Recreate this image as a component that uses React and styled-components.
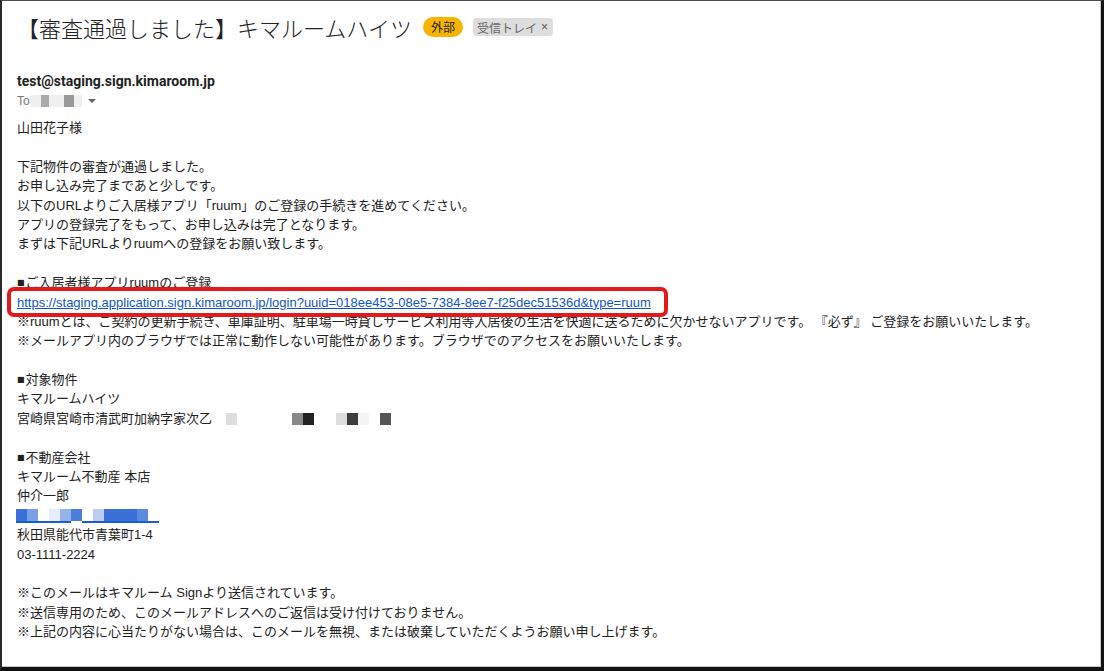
import React from "react";
import styled, { createGlobalStyle } from "styled-components";

const Global = createGlobalStyle`
  html, body { margin: 0; padding: 0; background: #fff; }
  body { font-family: "Liberation Sans", "Noto Sans CJK JP", sans-serif; }
`;

const Frame = styled.div`
  box-sizing: border-box;
  width: 1104px;
  height: 671px;
  background: #fff;
  border-top: 1px solid #4a4a4a;
  border-left: 2px solid #2a2a2a;
  border-right: 3px solid #111;
  border-bottom: 4px solid #111;
  box-shadow: inset -1px -1px 0 #c8c8c8;
  padding: 12px 0 0 15px;
  overflow: hidden;
  color: #222;
`;

const HeaderRow = styled.div`
  display: flex;
  align-items: center;
  height: 28px;
`;

const Title = styled.h1`
  margin: 0;
  font-family: "Noto Sans CJK JP", sans-serif;
  font-size: 22px;
  line-height: 28px;
  font-weight: 300;
  color: #222;
  white-space: nowrap;
`;

const Pill = styled.span`
  margin-left: 11px;
  height: 20px;
  padding: 0 8px;
  border-radius: 10px;
  background: #f6b400;
  color: #222;
  font-family: "Noto Sans CJK JP", sans-serif;
  font-size: 12px;
  line-height: 20px;
`;

const Label = styled.span`
  margin-left: 10px;
  height: 18px;
  display: flex;
  align-items: center;
  gap: 4px;
  padding: 0 5px 0 4px;
  border-radius: 4px;
  background: #dddddd;
  color: #666;
  font-family: "Noto Sans CJK JP", sans-serif;
  font-size: 12px;
`;

const LabelClose = styled.span`
  font-family: "Liberation Sans", sans-serif;
  font-size: 12px;
  color: #555;
`;

const Sender = styled.div`
  margin-top: 30px;
  font-family: Roboto, "Liberation Sans", sans-serif;
  font-weight: 700;
  font-size: 14px;
  line-height: 20px;
  color: #222;
`;

const ToRow = styled.div`
  display: flex;
  align-items: center;
  height: 19px;
  font-size: 12px;
  color: #777;
`;

const Caret = styled.span`
  margin-left: 6px;
  width: 0;
  height: 0;
  border-left: 4px solid transparent;
  border-right: 4px solid transparent;
  border-top: 4px solid #666;
`;

const Pixels = styled.span`
  display: inline-flex;
  vertical-align: middle;
  margin-left: ${(p) => p.$offset || 0}px;
`;

const Pixel = styled.span`
  display: inline-block;
  width: ${(p) => p.$w}px;
  height: ${(p) => p.$h}px;
  background: ${(p) => p.$c};
  border-bottom: ${(p) => (p.$u ? `2px solid ${p.$u}` : "none")};
`;

const Body = styled.div`
  margin-top: 8px;
  font-size: 13px;
  line-height: 19.4px;
  color: #222;
`;

const Para = styled.div`
  margin-bottom: 19.4px;
`;

const Line = styled.div`
  white-space: nowrap;
  height: 19.4px;
  display: flex;
  align-items: center;
`;

const Bullet = styled.span`
  font-family: "DejaVu Sans", sans-serif;
  font-size: 8px;
  margin-right: 1px;
`;

const Highlighted = styled.span`
  position: relative;
  display: inline-block;
  &::after {
    content: "";
    position: absolute;
    left: -10px;
    right: -17px;
    top: -6px;
    bottom: -5px;
    border: 4px solid #e3191b;
    border-radius: 7px;
    pointer-events: none;
  }
`;

const Link = styled.a`
  color: #1155cc;
  text-decoration: underline;
`;

const toBlur = [
  ["#f0f0f0", 11],
  ["#aaaaaa", 8],
  ["#f0f0f0", 15],
  ["#999999", 10],
  ["#f0f0f0", 8],
];

const addrBlur = ["#dddddd", "#fff", "#fff", "#fff", "#fff", "#fff", "#888888", "#222222", "#fff", "#fff", "#dddddd", "#3d3d3d", "#f4f4f4", "#fff", "#555555"];

const blueBlur = [
  ["#3a6fd6", "#1a5bd6"],
  ["#7aa0e4", "#1a5bd6"],
  ["#ffffff", "#1a5bd6"],
  ["#e8eef9", "#1a5bd6"],
  ["#94b4ea", "#1a5bd6"],
  ["#4a7ddc", "#fff"],
  ["#ffffff", "#1a5bd6"],
  ["#bccdf2", "#1a5bd6"],
  ["#3a70d6", "#1a5bd6"],
  ["#3a70d6", "#1a5bd6"],
  ["#3a70d6", "#1a5bd6"],
  ["#5a8be0", "#1a5bd6"],
  ["#ffffff", "#1a5bd6"],
];

export default function App() {
  return (
    <>
      <Global />
      <Frame>
        <HeaderRow>
          <Title>【審査通過しました】キマルームハイツ</Title>
          <Pill>外部</Pill>
          <Label>
            受信トレイ<LabelClose>×</LabelClose>
          </Label>
        </HeaderRow>
        <Sender>test@staging.sign.kimaroom.jp</Sender>
        <ToRow>
          To
          <Pixels>
            {toBlur.map(([c, w], i) => (
              <Pixel key={i} $c={c} $w={w} $h={12} />
            ))}
          </Pixels>
          <Caret />
        </ToRow>
        <Body>
          <Para>
            <Line>山田花子様</Line>
          </Para>
          <Para>
            <Line>下記物件の審査が通過しました。</Line>
            <Line>お申し込み完了まであと少しです。</Line>
            <Line>以下のURLよりご入居様アプリ「ruum」のご登録の手続きを進めてください。</Line>
            <Line>アプリの登録完了をもって、お申し込みは完了となります。</Line>
            <Line>まずは下記URLよりruumへの登録をお願い致します。</Line>
          </Para>
          <Para>
            <Line>
              <Bullet>■</Bullet>ご入居者様アプリruumのご登録
            </Line>
            <Line>
              <Highlighted>
                <Link href="#">https://staging.application.sign.kimaroom.jp/login?uuid=018ee453-08e5-7384-8ee7-f25dec51536d&amp;type=ruum</Link>
              </Highlighted>
            </Line>
            <Line>※ruumとは、ご契約の更新手続き、車庫証明、駐車場一時貸しサービス利用等入居後の生活を快適に送るために欠かせないアプリです。 『必ず』 ご登録をお願いいたします。</Line>
            <Line>※メールアプリ内のブラウザでは正常に動作しない可能性があります。ブラウザでのアクセスをお願いいたします。</Line>
          </Para>
          <Para>
            <Line>
              <Bullet>■</Bullet>対象物件
            </Line>
            <Line>キマルームハイツ</Line>
            <Line>
              宮崎県宮崎市清武町加納字家次乙
              <Pixels $offset={14}>
                {addrBlur.map((c, i) => (
                  <Pixel key={i} $c={c} $w={11} $h={12} />
                ))}
              </Pixels>
            </Line>
          </Para>
          <Para>
            <Line>
              <Bullet>■</Bullet>不動産会社
            </Line>
            <Line>キマルーム不動産 本店</Line>
            <Line>仲介一郎</Line>
            <Line>
              <Pixels $offset={-1}>
                {blueBlur.map(([c, u], i) => (
                  <Pixel key={i} $c={c} $u={u} $w={11} $h={12} />
                ))}
              </Pixels>
            </Line>
            <Line>秋田県能代市青葉町1-4</Line>
            <Line>03-1111-2224</Line>
          </Para>
          <Para>
            <Line>※このメールはキマルーム Signより送信されています。</Line>
            <Line>※送信専用のため、このメールアドレスへのご返信は受け付けておりません。</Line>
            <Line>※上記の内容に心当たりがない場合は、このメールを無視、または破棄していただくようお願い申し上げます。</Line>
          </Para>
        </Body>
      </Frame>
    </>
  );
}
